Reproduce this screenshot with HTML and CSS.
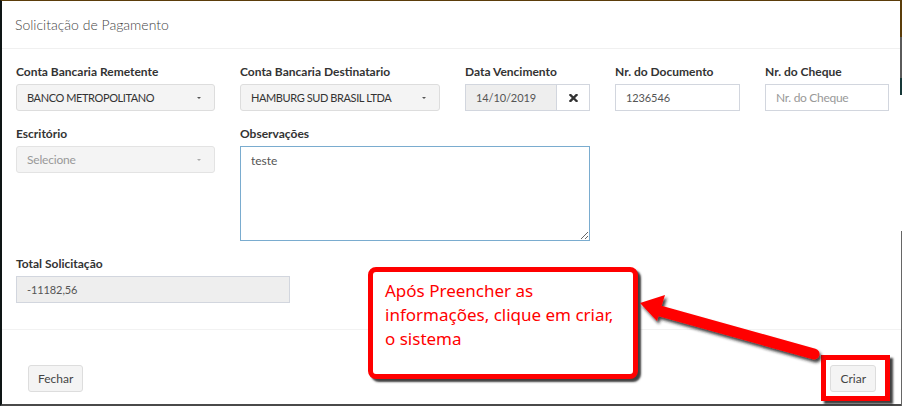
FILE: index.html
```html
<!DOCTYPE html>
<html lang="pt">
<head>
<meta charset="utf-8">
<title>Solicitação de Pagamento</title>
<link rel="stylesheet" href="styles.css">
</head>
<body>
<div class="screen">
  <div class="modal">
    <div class="modal-header">
      <h4 class="modal-title">Solicitação de Pagamento</h4>
    </div>
    <div class="modal-body">
      <div class="form-grid">
        <div class="group">
          <label class="lbl">Conta Bancaria Remetente</label>
          <div class="select-btn"><span>BANCO METROPOLITANO</span><i class="caret"></i></div>
        </div>
        <div class="group">
          <label class="lbl">Conta Bancaria Destinatario</label>
          <div class="select-btn"><span>HAMBURG SUD BRASIL LTDA</span><i class="caret"></i></div>
        </div>
        <div class="group">
          <label class="lbl">Data Vencimento</label>
          <div class="input-group">
            <div class="ctrl readonly grow">14/10/2019</div>
            <div class="addon"><svg width="9" height="8" viewBox="0 0 9 8"><path d="M1.5 1 L7.5 7 M7.5 1 L1.5 7" stroke="#333" stroke-width="2.4" stroke-linecap="square"/></svg></div>
          </div>
        </div>
        <div class="group">
          <label class="lbl">Nr. do Documento</label>
          <div class="ctrl">1236546</div>
        </div>
        <div class="group">
          <label class="lbl">Nr. do Cheque</label>
          <div class="ctrl placeholder">Nr. do Cheque</div>
        </div>

        <div class="group">
          <label class="lbl">Escritório</label>
          <div class="select-btn disabled"><span>Selecione</span><i class="caret"></i></div>
        </div>
        <div class="group span2">
          <label class="lbl">Observações</label>
          <textarea class="textarea">teste</textarea>
        </div>

        <div class="group row3">
          <label class="lbl">Total Solicitação</label>
          <div class="ctrl readonly total">-11182,56</div>
        </div>
      </div>
    </div>
    <div class="modal-footer">
      <button class="btn">Fechar</button>
      <button class="btn">Criar</button>
    </div>
  </div>

  <div class="edge-right-top"></div>
  <div class="edge-right-bottom"></div>

  <div class="callout">Após Preencher as informações, clique em criar, o sistema</div>
  <div class="highlight-box"></div>
  <svg class="arrow" width="902" height="406" viewBox="0 0 902 406">
    <defs>
      <filter id="sh" x="-10%" y="-10%" width="130%" height="140%">
        <feDropShadow dx="2" dy="3" stdDeviation="1.4" flood-color="#222" flood-opacity="0.85"/>
      </filter>
    </defs>
    <g filter="url(#sh)">
      <line x1="814" y1="354" x2="660" y2="311" stroke="#ff0000" stroke-width="11" stroke-linecap="round"/>
      <polygon points="640,303 665,295 657,321" fill="#ff0000"/>
    </g>
  </svg>
</div>
</body>
</html>
```

FILE: styles.css
```css
* { box-sizing: border-box; }

html, body {
  margin: 0;
  padding: 0;
  background: #ffffff;
}

body {
  font-family: "Lato", "Liberation Sans", sans-serif;
  color: #333333;
}

.screen {
  position: relative;
  width: 902px;
  height: 406px;
  overflow: hidden;
}

.modal {
  width: 902px;
  height: 406px;
  border-left: 2px solid #0e1515;
  border-top: 1px solid #5b3d0a;
  border-bottom: 2px solid #4a4a4a;
  background: #ffffff;
  display: flex;
  flex-direction: column;
}

.modal-header {
  height: 48px;
  border-bottom: 1px solid #f0f0f0;
  padding: 0 13px;
  display: flex;
  align-items: center;
}

.modal-title {
  margin: 0;
  font-size: 14px;
  font-weight: 300;
  color: #444444;
}

.modal-body {
  padding: 14px 0 26px 14px;
}

.form-grid {
  display: grid;
  grid-template-columns: 199px 200px 125px 125px 124px;
  column-gap: 25px;
  row-gap: 14px;
}

.group {
  display: flex;
  flex-direction: column;
}

.span2 { grid-column: 2 / span 2; }
.row3 { grid-column: 1; }

.lbl {
  display: block;
  font-size: 12px;
  font-weight: 700;
  line-height: 17px;
  margin-bottom: 4px;
  color: #333333;
}

.select-btn {
  height: 27px;
  background: #f4f4f4;
  border: 1px solid #dddddd;
  border-radius: 3px;
  padding: 0 13px 0 10px;
  display: flex;
  align-items: center;
  justify-content: space-between;
  font-size: 11px;
  letter-spacing: -0.4px;
  color: #333333;
}

.select-btn.disabled {
  color: #999999;
  background: #f4f4f4;
  border-color: #e3e3e3;
  font-size: 12px;
  letter-spacing: -0.2px;
}

.caret {
  width: 0;
  height: 0;
  border-top: 2px solid #555555;
  border-left: 2px solid transparent;
  border-right: 2px solid transparent;
}

.select-btn.disabled .caret { border-top-color: #aaaaaa; }

.ctrl {
  height: 27px;
  border: 1px solid #d2d6de;
  padding: 0 10px;
  display: flex;
  align-items: center;
  font-size: 11px;
  letter-spacing: -0.1px;
  color: #555555;
  background: #ffffff;
}

.ctrl.readonly { background: #eeeeee; }
.ctrl.placeholder { color: #999999; font-size: 12px; letter-spacing: -0.3px; }
.ctrl.total { width: 274px; }

.input-group {
  display: flex;
  height: 27px;
}

.grow { flex: 1; }

.addon {
  width: 33px;
  border: 1px solid #d2d6de;
  border-left: none;
  display: flex;
  align-items: center;
  justify-content: center;
  background: #ffffff;
}

.textarea {
  width: 350px;
  height: 95px;
  border: 1px solid #7aaccf;
  padding: 6px 10px;
  font-family: "Lato", "Liberation Sans", sans-serif;
  font-size: 12px;
  color: #555555;
  resize: both;
  outline: none;
  margin: 0;
}

.modal-footer {
  flex: 1;
  border-top: 1px solid #f2f2f2;
  padding: 35px 26px 0 26px;
  display: flex;
  justify-content: space-between;
  align-items: flex-start;
}

.btn {
  height: 27px;
  padding: 0 9px;
  background: #f4f4f4;
  border: 1px solid #dddddd;
  border-radius: 3px;
  font-family: "Lato", "Liberation Sans", sans-serif;
  font-size: 12px;
  color: #444444;
  margin: 0;
}

.edge-right-top {
  position: absolute;
  right: 0;
  top: 0;
  width: 2px;
  height: 95px;
  background: linear-gradient(#5b3d0a 0, #5b3d0a 37px, #5a5a5a 37px, #5a5a5a 78px, #163838 78px);
}

.edge-right-bottom {
  position: absolute;
  right: 0;
  top: 231px;
  width: 1px;
  height: 175px;
  background: #666666;
}

.callout {
  position: absolute;
  left: 368px;
  top: 267px;
  width: 270px;
  height: 112px;
  border: 5px solid #ff0000;
  border-radius: 8px;
  background: #ffffff;
  box-shadow: 3px 3px 2px rgba(30, 30, 30, 0.85);
  padding: 7px 10px 0 12px;
  font-family: "Noto Sans", "Open Sans", sans-serif;
  font-size: 17px;
  line-height: 24px;
  color: #ff0000;
}

.highlight-box {
  position: absolute;
  left: 821px;
  top: 355px;
  width: 69px;
  height: 46px;
  border: 5px solid #ff0000;
  box-shadow: 3px 3px 2px rgba(30, 30, 30, 0.85);
}

.arrow {
  position: absolute;
  left: 0;
  top: 0;
  pointer-events: none;
}
```
